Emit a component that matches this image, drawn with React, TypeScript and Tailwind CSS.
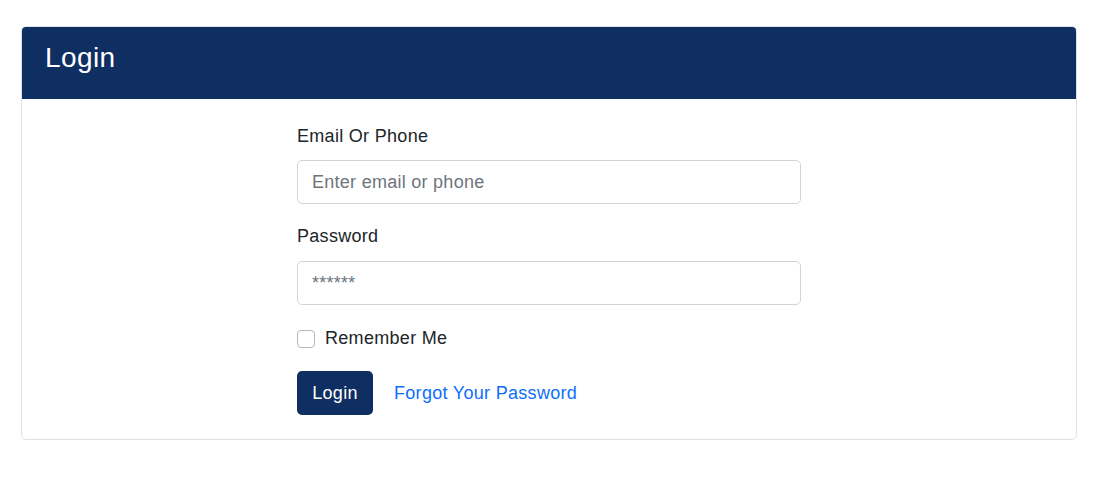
import React from "react";

export default function App() {
  return (
    <div
      className="min-h-screen bg-white pt-[26px] pl-[21px] text-[#212529]"
      style={{ fontFamily: '"Liberation Sans", Arial, sans-serif' }}
    >
      <div className="w-[1056px] rounded-[5px] border border-[#dfe1e5] overflow-hidden">
        <div className="h-[72px] bg-[#0f2f62] px-[23px] pt-[14px] text-[28px] leading-[34px] tracking-[0.4px] text-white">
          Login
        </div>
        <div className="pt-[24px] pb-[24px] tracking-[0.3px]">
          <div className="mx-auto w-[504px]">
            <div>
              <label className="mb-[10px] block text-[18px] leading-[27px]">Email Or Phone</label>
              <input
                type="text"
                placeholder="Enter email or phone"
                className="block h-[44px] w-full rounded-[5px] border border-[#ced4da] bg-white px-[14px] text-[18px] tracking-[0.27px] text-[#212529] placeholder:text-[#6c757d] outline-none"
              />
            </div>
            <div className="mt-[19px]">
              <label className="mb-[11px] block text-[18px] leading-[27px]">Password</label>
              <input
                type="password"
                placeholder="******"
                className="block h-[44px] w-full rounded-[5px] border border-[#ced4da] bg-white px-[14px] text-[18px] tracking-[0.27px] text-[#212529] placeholder:text-[#6c757d] outline-none"
              />
            </div>
            <div className="mt-[20px] flex h-[27px] items-center gap-[10px]">
              <input
                type="checkbox"
                className="m-0 h-[18px] w-[18px] appearance-none rounded-[4px] border border-[#b3b8bd] bg-white"
              />
              <span className="text-[18px] leading-[27px]">Remember Me</span>
            </div>
            <div className="mt-[19px] flex items-center gap-[21px]">
              <button className="h-[44px] w-[76px] rounded-[5px] bg-[#0f2f62] text-[18px] leading-[27px] tracking-[0.27px] text-white">
                Login
              </button>
              <a href="#" className="text-[18px] leading-[27px] text-[#0d6efd]">
                Forgot Your Password
              </a>
            </div>
          </div>
        </div>
      </div>
    </div>
  );
}
